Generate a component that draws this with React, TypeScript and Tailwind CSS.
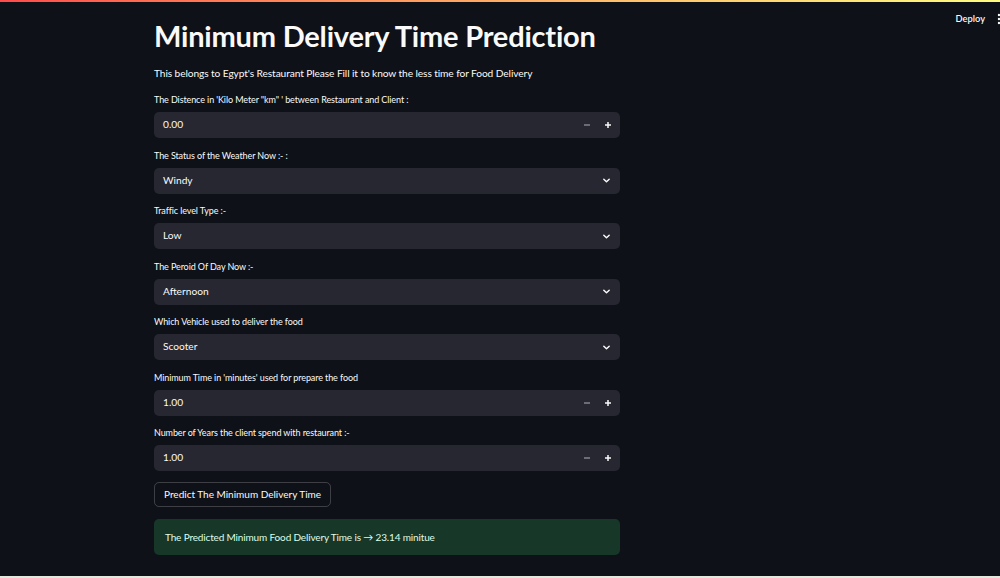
import React from "react";

const font = { fontFamily: "Lato, 'Noto Sans', sans-serif" };

function Label({ children }: { children: React.ReactNode }) {
  return (
    <div className="h-[14px] mb-[5px] flex items-center text-[9px] tracking-[-0.1px] text-[#fafafa]">{children}</div>
  );
}

function NumberField({ label, value }: { label: string; value: string }) {
  return (
    <div>
      <Label>{label}</Label>
      <div className="h-[26px] rounded-[5px] bg-[#262730] flex items-center pl-[9px] text-[10.2px] text-[#fafafa]">
        <span className="flex-1">{value}</span>
        <span className="w-[21px] flex justify-center">
          <svg width="8" height="8" viewBox="0 0 8 8"><path d="M1 4h6" stroke="#9a9ba3" strokeWidth="1.2" /></svg>
        </span>
        <span className="w-[21px] mr-[2px] flex justify-center">
          <svg width="8" height="8" viewBox="0 0 8 8"><path d="M1 4h6M4 1v6" stroke="#fafafa" strokeWidth="1.5" /></svg>
        </span>
      </div>
    </div>
  );
}

function SelectField({ label, value }: { label: string; value: string }) {
  return (
    <div>
      <Label>{label}</Label>
      <div className="h-[26px] rounded-[5px] bg-[#262730] flex items-center pl-[9px] pr-[9px] text-[10.2px] text-[#fafafa]">
        <span className="flex-1">{value}</span>
        <svg width="9" height="9" viewBox="0 0 10 10">
          <path d="M2 3.5l3 3 3-3" fill="none" stroke="#fafafa" strokeWidth="1.6" strokeLinecap="round" strokeLinejoin="round" />
        </svg>
      </div>
    </div>
  );
}

export default function App() {
  return (
    <div className="relative min-h-screen h-[578px] bg-[#0e1117] flex flex-col overflow-hidden" style={font}>
      <div className="h-[2px] bg-gradient-to-r from-[#ff4b4b] to-[#fffd80]" />
      <div className="absolute top-[12px] right-0 flex items-center gap-[12px] text-[9.3px] font-semibold text-[#fafafa]">
        <span>Deploy</span>
        <svg width="4" height="12" viewBox="0 0 4 12" className="-mr-[1px]">
          <circle cx="2" cy="2" r="1.2" fill="#fafafa" />
          <circle cx="2" cy="6" r="1.2" fill="#fafafa" />
          <circle cx="2" cy="10" r="1.2" fill="#fafafa" />
        </svg>
      </div>
      <main className="ml-[154px] w-[466px] pt-[16px] flex-1 flex flex-col">
        <h1 className="h-[36px] leading-[36px] text-[29px] font-bold text-[#fafafa] tracking-[-0.2px]">
          Minimum Delivery Time Prediction
        </h1>
        <p className="mt-[11px] h-[16px] leading-[16px] text-[10.2px] tracking-[-0.1px] text-[#fafafa]">
          This belongs to Egypt's Restaurant Please Fill it to know the less time for Food Delivery
        </p>
        <div className="mt-[12px] flex flex-col gap-[10.5px]">
          <NumberField label={`The Distence in 'Kilo Meter "km" ' between Restaurant and Client :`} value="0.00" />
          <SelectField label="The Status of the Weather Now :- :" value="Windy" />
          <SelectField label="Traffic level Type :-" value="Low" />
          <SelectField label="The Peroid Of Day Now :-" value="Afternoon" />
          <SelectField label="Which Vehicle used to deliver the food" value="Scooter" />
          <NumberField label="Minimum Time in 'minutes' used for prepare the food" value="1.00" />
          <NumberField label="Number of Years the client spend with restaurant :-" value="1.00" />
        </div>
        <div className="mt-[11px] flex">
          <button className="h-[25px] px-[9px] rounded-[5px] border border-[#fafafa]/20 text-[10px] text-[#fafafa] flex items-center">
            Predict The Minimum Delivery Time
          </button>
        </div>
        <div className="mt-[12px] h-[36px] rounded-[5px] bg-[#173828] flex items-center px-[11px] text-[10px] tracking-[-0.15px] text-[#dffde9]">
          The Predicted Minimum Food Delivery Time is → 23.14 minitue
        </div>
      </main>
      <div className="h-[2px] bg-[#e4e8dc]" />
    </div>
  );
}
